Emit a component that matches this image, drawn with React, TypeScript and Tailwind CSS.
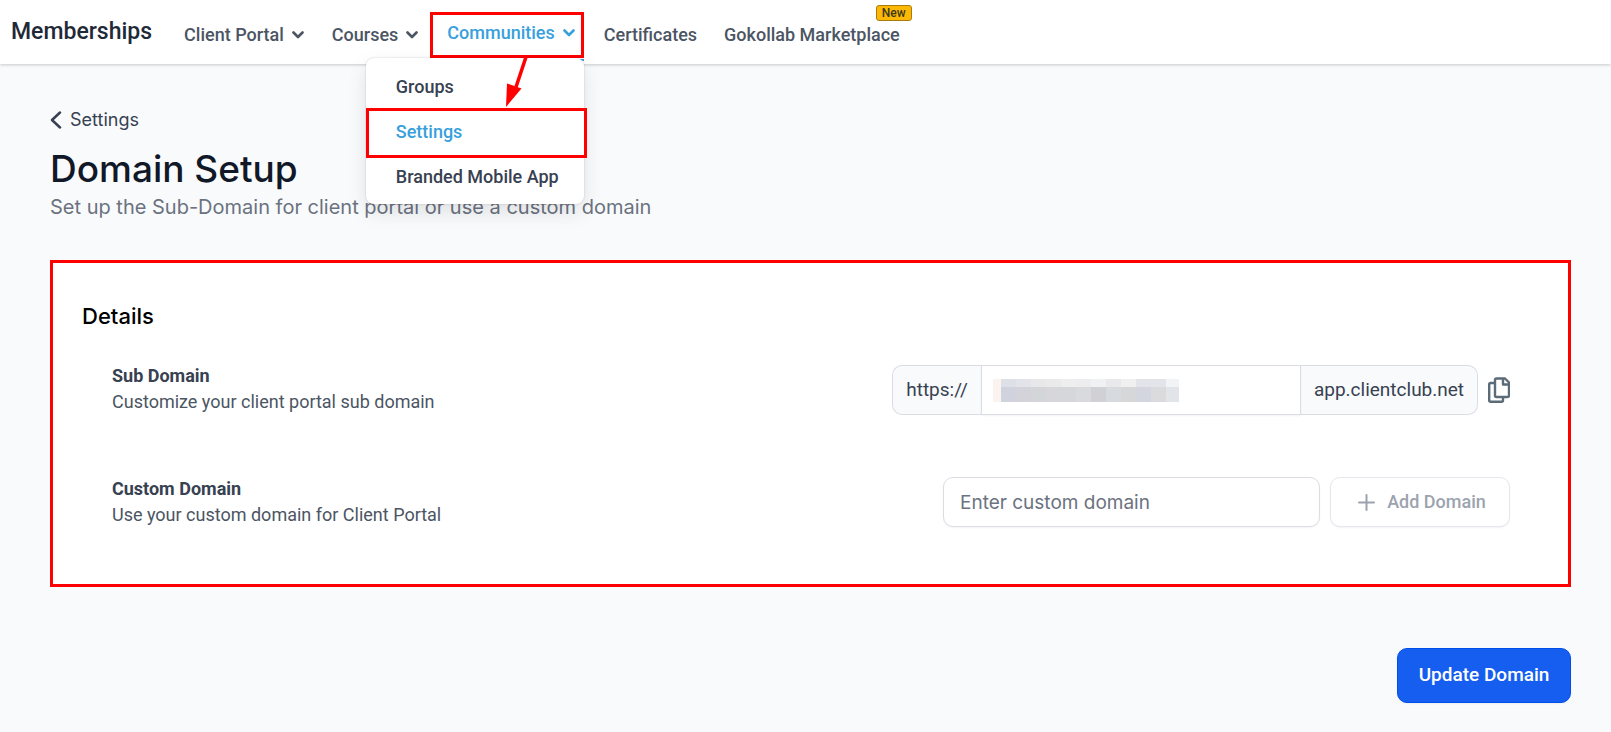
import React from 'react';

const menuItems = [
  { label: 'Groups', active: false },
  { label: 'Settings', active: true },
  { label: 'Branded Mobile App', active: false },
];

const maskTop = ['#dde1e7', '#e3e4e9', '#e8e8ea', '#eaeaeb', '#eeeeef', '#ededf0', '#f0f1f3', '#e9e9eb', '#eff0ef', '#e3e4e9', '#e3e4e9', '#f2f3f5'];
const maskBottom = ['#d0d3de', '#d3d3d9', '#d4d5d9', '#d6d6db', '#d6d7db', '#d9dade', '#d1d1d5', '#d7dbdf', '#d6d7d8', '#d3d5df', '#dbdbde', '#e1e5ea'];

const Chevron: React.FC = () => (
  <svg width="12" height="8" viewBox="0 0 12 8" fill="none" stroke="currentColor" strokeWidth="2.6" strokeLinecap="round" strokeLinejoin="round" aria-hidden="true">
    <path d="M1.5 1.5L6 6l4.5-4.5" />
  </svg>
);

const Header: React.FC = () => (
  <header className="relative z-10 flex h-16 items-center bg-white pl-[11px] shadow-[0_1px_3px_rgba(0,0,0,0.2)]">
    <h1 className="mr-8 text-[23px] leading-8 font-medium text-[#1f2937]">Memberships</h1>

    <nav className="flex items-center pt-[6px] text-lg leading-6 font-medium text-[#4b5563]">
      <button type="button" className="mr-7 flex items-center gap-2">
        Client Portal
        <Chevron />
      </button>
      <button type="button" className="mr-3 flex items-center gap-2">
        Courses
        <Chevron />
      </button>

      {/* Communities with its open menu */}
      <div className="relative mr-5">
        <button type="button" className="flex h-[46px] items-center gap-2 border-[3px] border-[#ff0000] pr-[6px] pb-1 pl-[14px] text-[#38a0db]">
          Communities
          <Chevron />
        </button>
        <span className="absolute top-[47px] right-0 h-[2px] w-6 bg-[#38a0db]" />
        <ul className="absolute top-[46px] right-0 w-[218px] rounded-lg bg-white pt-[6px] pb-[5px] text-[#374151] shadow-[0_0_2px_rgba(0,0,0,0.2),0_8px_20px_rgba(0,0,0,0.1)]">
          {menuItems.map((item) => (
            <li key={item.label} className="relative">
              <a href="#" className={item.active ? 'flex h-[45px] items-center pl-[30px] text-[#38a0db]' : 'flex h-[45px] items-center pl-[30px]'}>
                {item.label}
              </a>
              {item.active && <span className="absolute -top-px -right-[3px] left-0 h-[50px] border-[3px] border-[#ff0000]" />}
            </li>
          ))}
        </ul>
        <svg className="absolute top-[44px] left-[76px]" width="36" height="52" viewBox="0 0 36 52" aria-hidden="true">
          <path d="M20 1L10 31" stroke="#ff0000" strokeWidth="3.5" />
          <path d="M1 27.500l14.500 5L0 51z" fill="#ff0000" />
        </svg>
      </div>

      <a href="#" className="mr-[27px]">Certificates</a>
      <a href="#" className="relative">
        Gokollab Marketplace
        <span className="absolute -top-[18px] -right-[12px] flex h-4 w-9 items-center justify-center rounded-[3px] border border-[#a97c0f] bg-[#fdb705] text-xs text-[#3b3a1c]">
          New
        </span>
      </a>
    </nav>
  </header>
);

const Details: React.FC = () => (
  <section className="mt-10 border-[3px] border-[#ff0000] bg-white pt-[35px] pr-[58px] pb-14 pl-[29px]">
    <h3 className="font-['Inter',sans-serif] text-[22px] leading-9 font-medium text-black">Details</h3>

    <div className="mt-[29px] flex flex-col gap-[61px] pl-[30px]">
      <div className="flex items-end justify-between">
        <label htmlFor="sub-domain" className="text-lg leading-[26px] text-[#4b5563]">
          <span className="block font-bold text-[#374151]">Sub Domain</span>
          Customize your client portal sub domain
        </label>
        <div className="flex items-center gap-[10px]">
          <div className="flex h-[50px] w-[586px] text-[19px] text-[#374151]">
            <span className="flex w-[89px] shrink-0 items-center justify-center rounded-l-[10px] border border-r-0 border-[#dcdde4] bg-[#f9fafc]">https://</span>
            <div className="relative grow">
              <input id="sub-domain" type="text" className="h-full w-full border border-[#dcdde4] bg-white px-4 shadow-xs" />
              <div className="pointer-events-none absolute top-[14px] left-3 flex">
                <span className="h-[23px] w-2 bg-[#faf3f0]" />
                <div>
                  <div className="flex">
                    {maskTop.map((color, i) => (
                      <span key={i} className="h-2 w-[15px] last:w-[13px]" style={{ backgroundColor: color }} />
                    ))}
                  </div>
                  <div className="flex">
                    {maskBottom.map((color, i) => (
                      <span key={i} className="h-[15px] w-[15px] last:w-[13px]" style={{ backgroundColor: color }} />
                    ))}
                  </div>
                </div>
              </div>
            </div>
            <span className="flex w-[177px] shrink-0 items-center justify-center rounded-r-[10px] border border-l-0 border-[#dcdde4] bg-[#f9fafc]">app.clientclub.net</span>
          </div>
          <button type="button" aria-label="Copy domain" className="text-[#5b6b77]">
            <svg width="22" height="26" viewBox="0 0 22 26" fill="none" stroke="currentColor" strokeWidth="2.4" strokeLinejoin="round">
              <path d="M8.500 1.500h8.500l4 4v13a1.500 1.500 0 0 1-1.500 1.500h-11A1.500 1.500 0 0 1 7 18.500V3a1.500 1.500 0 0 1 1.500-1.500z" />
              <path d="M15 2v5.500h5.500" />
              <path d="M7 6H2.700A1.500 1.500 0 0 0 1.200 7.500v15.800A1.500 1.500 0 0 0 2.700 24.800h10.800a1.500 1.500 0 0 0 1.500-1.500V20" />
            </svg>
          </button>
        </div>
      </div>

      <div className="flex items-center justify-between">
        <label htmlFor="custom-domain" className="text-lg leading-[26px] text-[#4b5563]">
          <span className="block font-bold text-[#374151]">Custom Domain</span>
          Use your custom domain for Client Portal
        </label>
        <div className="flex items-center gap-[10px]">
          <input
            id="custom-domain"
            type="text"
            placeholder="Enter custom domain"
            className="h-[50px] w-[377px] rounded-[10px] border border-[#dcdde4] bg-white px-4 font-['Inter',sans-serif] text-[19px] shadow-xs placeholder:text-[#6b7280]"
          />
          <button type="button" className="flex h-[50px] w-[180px] items-center justify-center gap-3 rounded-[10px] border border-[#e6e7ec] bg-white pl-1 text-lg font-medium text-[#9ca3af] shadow-xs">
            <svg width="17" height="17" viewBox="0 0 17 17" stroke="currentColor" strokeWidth="2" strokeLinecap="round" aria-hidden="true">
              <path d="M8.500 1v15M1 8.500h15" />
            </svg>
            Add Domain
          </button>
        </div>
      </div>
    </div>
  </section>
);

const App: React.FC = () => {
  return (
    <div className="min-h-screen bg-[#f9fafc] font-['Roboto',sans-serif]">
      <Header />

      <main className="pt-10 pr-10 pb-[29px] pl-[50px]">
        <div className="font-['Inter',sans-serif]">
          <a href="#" className="flex items-center gap-2 text-lg leading-8 text-[#374151]">
            <svg width="12" height="18" viewBox="0 0 12 18" fill="none" stroke="currentColor" strokeWidth="2.5" strokeLinecap="round" strokeLinejoin="round" aria-hidden="true">
              <path d="M10 1.500L2 9l8 7.500" />
            </svg>
            Settings
          </a>
          <h2 className="mt-2 text-[37px] leading-[50px] font-medium text-[#111827]">Domain Setup</h2>
          <p className="text-xl leading-[26px] text-[#6b7280]">
            Set up the Sub-Domain for client portal or use a custom domain
          </p>
        </div>

        <Details />

        <div className="mt-[61px] flex justify-end">
          <button type="button" className="h-[55px] w-[174px] rounded-[10px] border border-[#004eeb] bg-[#155eef] text-[19px] font-medium text-white shadow-xs">
            Update Domain
          </button>
        </div>
      </main>
    </div>
  );
};

export default App;
